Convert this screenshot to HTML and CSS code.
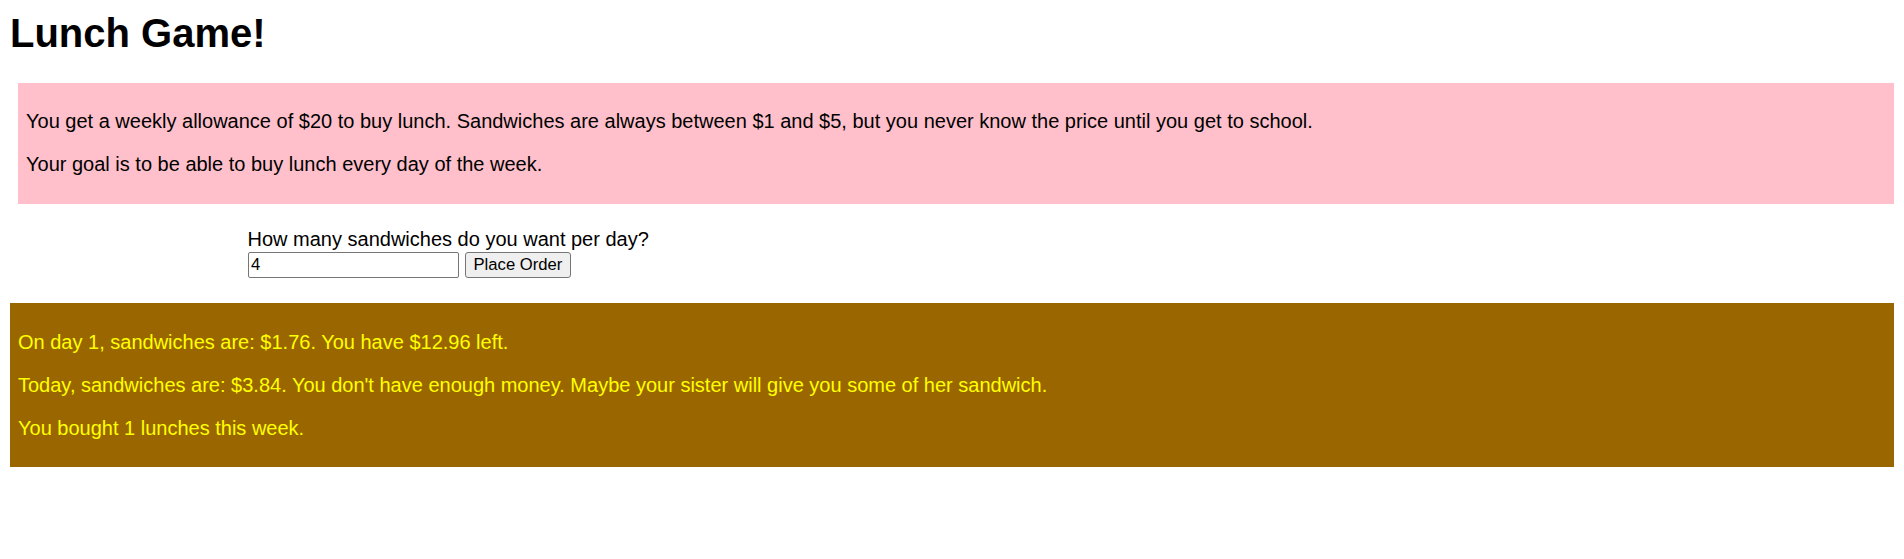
FILE: index.html
```html
<!DOCTYPE html>
<html lang="en">
<head>
<meta charset="utf-8">
<title>Lunch Game!</title>
<link rel="stylesheet" href="styles.css">
</head>
<body>
<h1 class="title">Lunch Game!</h1>
<div class="intro">
  <p>You get a weekly allowance of $20 to buy lunch. Sandwiches are always between $1 and $5, but you never know the price until you get to school.</p>
  <p>Your goal is to be able to buy lunch every day of the week.</p>
</div>
<div class="controls">
  <label class="prompt" for="count">How many sandwiches do you want per day?</label>
  <div class="row">
    <input class="count" id="count" type="text" value="4">
    <button class="order" type="button">Place Order</button>
  </div>
</div>
<div class="results">
  <p>On day 1, sandwiches are: $1.76. You have $12.96 left.</p>
  <p>Today, sandwiches are: $3.84. You don't have enough money. Maybe your sister will give you some of her sandwich.</p>
  <p>You bought 1 lunches this week.</p>
</div>
</body>
</html>
```

FILE: styles.css
```css
html {
  background: #ffffff;
  overflow: hidden;
  scrollbar-width: none;
}

body {
  margin: 10px;
  font-family: "Liberation Sans", Arial, sans-serif;
  font-size: 20px;
  line-height: 23px;
  color: #000000;
}

.title {
  margin: 0 0 27px;
  font-size: 40px;
  line-height: 46px;
  font-weight: bold;
}

.intro {
  box-sizing: border-box;
  width: calc(100vw - 18px);
  margin: 0 0 0 8px;
  padding: 7px 8px 8px;
  background: #ffc0cb;
}

.intro p,
.results p {
  margin: 20px 0;
}

.controls {
  margin: 24px 0 25.5px;
  padding-left: 237.5px;
}

.prompt {
  display: block;
}

.row {
  display: flex;
  align-items: center;
  gap: 6.5px;
  padding-top: 1px;
}

.count {
  box-sizing: border-box;
  width: 211px;
  height: 25.5px;
  margin: 0;
  padding: 1px 2.5px;
  border: 1px solid #767676;
  border-radius: 2px;
  font-family: "Liberation Sans", Arial, sans-serif;
  font-size: 16.67px;
  color: #000000;
  background: #ffffff;
}

.order {
  box-sizing: border-box;
  height: 25.5px;
  margin: 0;
  padding: 1px 7.5px;
  border: 1px solid #767676;
  border-radius: 3px;
  background: #efefef;
  font-family: "Liberation Sans", Arial, sans-serif;
  font-size: 16.67px;
  color: #000000;
}

.results {
  box-sizing: border-box;
  width: calc(100vw - 10px);
  margin: 0;
  padding: 8px 8px 7px;
  background: #996600;
  color: #ffff00;
}
```
